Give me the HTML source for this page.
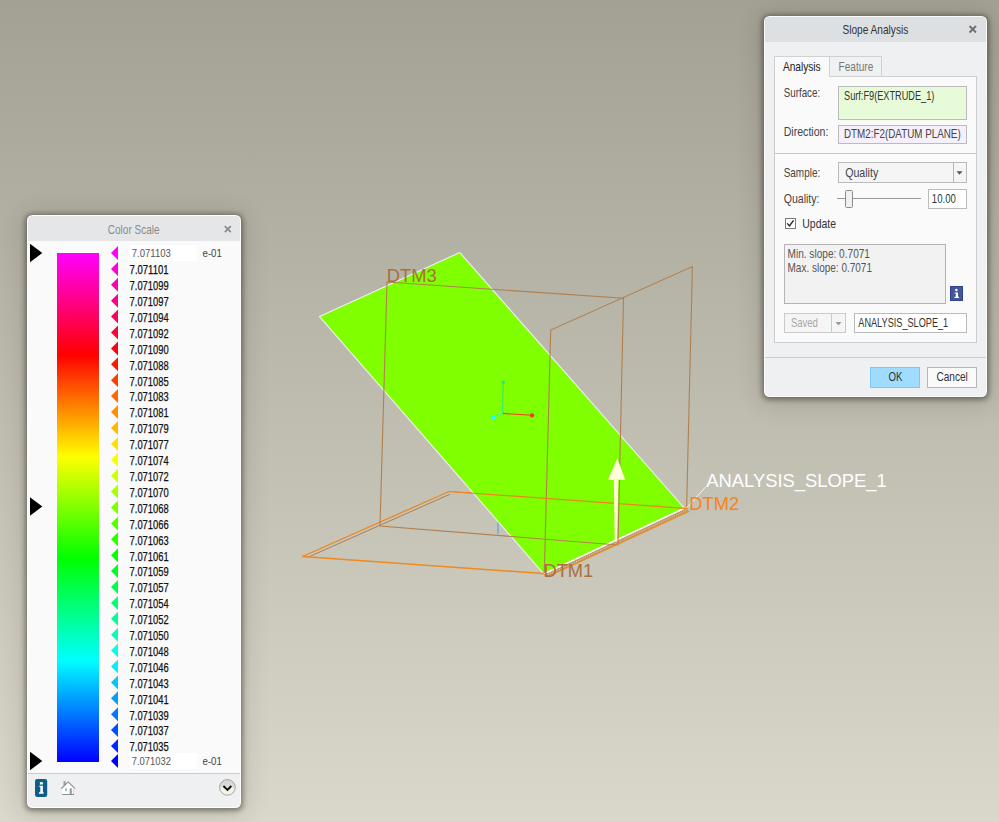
<!DOCTYPE html>
<html><head><meta charset="utf-8">
<style>
html,body{margin:0;padding:0;}
body{width:999px;height:822px;overflow:hidden;position:relative;font-family:"Liberation Sans",sans-serif;font-size:11.5px;color:#333;
background:linear-gradient(to bottom,#a3a094 0%,#dad8cb 100%);}
.abs{position:absolute;}
svg{position:absolute;left:0;top:0;}
.panel{position:absolute;box-sizing:border-box;background:#eff0f2;border:1px solid rgba(255,255,255,.75);border-radius:5.5px;box-shadow:0 1px 5px 1.5px rgba(30,28,15,.44),0 3px 26px 3px rgba(30,28,15,.16);overflow:hidden;}
.box{position:absolute;box-sizing:border-box;border:1px solid #b4b6b8;}
text{font-family:"Liberation Sans",sans-serif;}
</style></head><body>
<svg width="999" height="822" viewBox="0 0 999 822">
<!-- DTM1 horizontal plane (orange), part behind surface -->
<polyline points="302.5,556.5 449,491.5 688,508.6" fill="none" stroke="#ec861c" stroke-width="1.2"/>
<polyline points="308,557.2 450,494.2" fill="none" stroke="#a87848" stroke-width="0.9"/>
<!-- green surface -->
<polygon points="459.8,252.5 319.5,316.6 543.5,573.7 684.2,508" fill="#80ff00" stroke="#f4ecfa" stroke-width="1.1" stroke-linejoin="round"/>
<!-- band along bottom-right edge: brown hatch + orange -->
<polygon points="544.3,574.6 685,509.1 689,511 547.4,577" fill="#c09464"/>
<polyline points="543.8,574.2 684.4,508.6" fill="none" stroke="#ffffff" stroke-width="1.1"/>
<polyline points="545.6,575.8 686.8,510.2" fill="none" stroke="#eadcc8" stroke-width="0.8" stroke-dasharray="1.2 1.2"/>
<g fill="none" stroke="#b08050" stroke-width="1.1">
<!-- DTM3 plane -->
<polygon points="387,282 623.5,298.3 618,545 380,526"/>
<!-- DTM2 plane -->
<polyline points="544.3,573 550.7,330 692.4,266.6 686.6,508.5"/>
</g>
<!-- DTM1 lines over the green -->
<polyline points="449,491.5 688,508.6" fill="none" stroke="#ec861c" stroke-width="1.2"/>
<polyline points="302.5,556.5 543,573.6" fill="none" stroke="#f08a1c" stroke-width="1.5"/>
<polyline points="543,573.6 547.4,576.8 689.4,511.2" fill="none" stroke="#f08a1c" stroke-width="1.2" stroke-linejoin="round"/>
<!-- csys -->
<polyline points="503.2,382 502.6,413" fill="none" stroke="#30f068" stroke-width="1.2"/>
<polyline points="502.6,413.2 493.3,417.2" fill="none" stroke="#20f8f8" stroke-width="1"/>
<polyline points="502.8,413.4 532,415.3" fill="none" stroke="#f04020" stroke-width="1.1"/>
<circle cx="503.2" cy="382.2" r="1.7" fill="#2ce870"/>
<circle cx="493.2" cy="417.3" r="2.4" fill="#20ffff"/>
<circle cx="532.1" cy="415.4" r="2.1" fill="#ff2a2a"/>
<line x1="498" y1="522.5" x2="498" y2="534" stroke="#4aa0e0" stroke-width="1"/>
<!-- arrow -->
<polygon points="617.3,458.2 608,479.7 625.2,479.7" fill="#ffffd8"/>
<polygon points="613.8,479.3 618.4,479.3 617,541.5 614.7,541.5" fill="#ffffd0"/>
<!-- leader -->
<line x1="686.5" y1="508" x2="706" y2="486.6" stroke="#f4f4f4" stroke-width="1"/>
<g font-family="Liberation Sans, sans-serif">
<text x="386.8" y="282" font-size="18.3" fill="#a87040">DTM3</text>
<text x="543.5" y="577" font-size="18.3" fill="#a87040">DTM1</text>
<text x="689.3" y="510" font-size="18.3" fill="#f6841a">DTM2</text>
<text x="706.3" y="487.3" font-size="18.6" textLength="180.5" lengthAdjust="spacingAndGlyphs" fill="#ffffff">ANALYSIS_SLOPE_1</text>
</g>
</svg>

<div class="panel" style="left:27px;top:215px;width:214px;height:593px;background:#fafafa;">
<div class="abs" style="left:0;top:0;width:214px;height:25px;background:#e5e6e7;"></div>
<div class="abs" style="left:0;top:557px;width:214px;height:34px;background:#eff0f2;border-top:1px solid #c9cacc;"></div>
</div>
<div class="abs" style="left:57px;top:253px;width:42px;height:508.5px;background:linear-gradient(to bottom,#ff00ff 0%,#ff0000 20%,#ffff00 40%,#00ff00 60%,#00ffff 80%,#0000ff 100%);"></div>
<div class="abs" style="left:130px;top:245px;width:66.5px;height:16px;background:#fff;"></div>
<div class="abs" style="left:130px;top:753px;width:66.5px;height:16px;background:#fff;"></div>
<div class="panel" style="left:764px;top:16px;width:223px;height:381px;">
<div class="abs" style="left:0;top:0;width:223px;height:25px;background:#dde0e2;"></div>
<div class="abs" style="left:0;top:340px;width:223px;height:1px;background:#c9cbcd;"></div>
</div>
<div class="box" style="left:774px;top:76px;width:203px;height:267px;background:#fafafa;border-color:#cccdcf;"></div>
<div class="box" style="left:829px;top:56px;width:53px;height:21px;background:#f0f1f3;border-color:#cfd1d3;"></div>
<div class="box" style="left:774px;top:56px;width:56px;height:21px;background:#fafafa;border-color:#cfd1d3;border-bottom:none;"></div>
<div class="abs" style="left:775px;top:153px;width:201px;height:1px;background:#c4c6c8;"></div>
<div class="box" style="left:838px;top:86px;width:129px;height:34px;background:#e8fbd9;border-color:#b9bbbd;"></div>
<div class="box" style="left:838px;top:125px;width:129px;height:19px;background:#f6f0fc;border-color:#b9bbbd;"></div>
<div class="box" style="left:838px;top:162px;width:129px;height:21px;background:#f5f5f5;border-color:#b9bbbd;"></div>
<div class="abs" style="left:953px;top:163px;width:1px;height:19px;background:#b4b6b8;"></div>
<div class="abs" style="left:837px;top:197.5px;width:84px;height:1px;background:#9a9a9a;"></div>
<div class="box" style="left:845px;top:190px;width:8px;height:18px;background:#f0f0f0;border-color:#8c8c8c;border-radius:1.5px;"></div>
<div class="box" style="left:928px;top:189px;width:39px;height:20px;background:#fff;border-color:#b9bbbd;"></div>
<div class="box" style="left:785px;top:218px;width:11px;height:11px;background:#fff;border-color:#7a7a7a;"></div>
<div class="box" style="left:784px;top:244px;width:162px;height:60px;background:#f2f2f2;border-color:#b4b4b4;"></div>
<div class="box" style="left:784px;top:313px;width:62px;height:20px;background:#f5f5f5;border-color:#cacaca;"></div>
<div class="abs" style="left:831px;top:314px;width:1px;height:18px;background:#cacaca;"></div>
<div class="box" style="left:854px;top:313px;width:113px;height:20px;background:#fff;border-color:#b9bbbd;"></div>
<div class="box" style="left:870px;top:367px;width:50px;height:21px;background:#9fdcff;border-color:#7cc8f4;"></div>
<div class="box" style="left:927px;top:367px;width:50px;height:21px;background:#fafafa;border-color:#b4b6b8;"></div>
<div class="abs" style="left:950.1px;top:286.2px;width:12.7px;height:14.6px;background:#2f4189;"></div>
<div class="abs" style="left:951.2px;top:287.4px;width:10.5px;height:12.2px;background:#43569a;"></div>
<svg width="999" height="822" viewBox="0 0 999 822">
<path d="M224.8 226.2 L230.8 232.2 M230.8 226.2 L224.8 232.2" stroke="#8c8c8c" stroke-width="1.8" fill="none"/>
<polygon points="30,243.8 42.3,253.0 30,262.2" fill="#000"/>
<polygon points="30,497.3 42.3,506.5 30,515.7" fill="#000"/>
<polygon points="30,751.8 42.3,761.0 30,770.2" fill="#000"/>
<polygon points="118,246.0 111,253.0 118,260.0" fill="#ff00ff"/>
<polygon points="118,261.9 111,268.9 118,275.9" fill="#ff00d7"/>
<polygon points="118,277.8 111,284.8 118,291.8" fill="#ff00af"/>
<polygon points="118,293.7 111,300.7 118,307.7" fill="#ff0087"/>
<polygon points="118,309.6 111,316.6 118,323.6" fill="#ff0060"/>
<polygon points="118,325.5 111,332.5 118,339.5" fill="#ff0038"/>
<polygon points="118,341.4 111,348.4 118,355.4" fill="#ff0010"/>
<polygon points="118,357.3 111,364.3 118,371.3" fill="#ff1800"/>
<polygon points="118,373.2 111,380.2 118,387.2" fill="#ff4000"/>
<polygon points="118,389.1 111,396.1 118,403.1" fill="#ff6800"/>
<polygon points="118,405.0 111,412.0 118,419.0" fill="#ff8f00"/>
<polygon points="118,421.0 111,428.0 118,435.0" fill="#ffb700"/>
<polygon points="118,436.9 111,443.9 118,450.9" fill="#ffdf00"/>
<polygon points="118,452.8 111,459.8 118,466.8" fill="#f7ff00"/>
<polygon points="118,468.7 111,475.7 118,482.7" fill="#cfff00"/>
<polygon points="118,484.6 111,491.6 118,498.6" fill="#a7ff00"/>
<polygon points="118,500.5 111,507.5 118,514.5" fill="#80ff00"/>
<polygon points="118,516.4 111,523.4 118,530.4" fill="#58ff00"/>
<polygon points="118,532.3 111,539.3 118,546.3" fill="#30ff00"/>
<polygon points="118,548.2 111,555.2 118,562.2" fill="#08ff00"/>
<polygon points="118,564.1 111,571.1 118,578.1" fill="#00ff20"/>
<polygon points="118,580.0 111,587.0 118,594.0" fill="#00ff48"/>
<polygon points="118,595.9 111,602.9 118,609.9" fill="#00ff70"/>
<polygon points="118,611.8 111,618.8 118,625.8" fill="#00ff97"/>
<polygon points="118,627.7 111,634.7 118,641.7" fill="#00ffbf"/>
<polygon points="118,643.6 111,650.6 118,657.6" fill="#00ffe7"/>
<polygon points="118,659.5 111,666.5 118,673.5" fill="#00efff"/>
<polygon points="118,675.4 111,682.4 118,689.4" fill="#00c7ff"/>
<polygon points="118,691.3 111,698.3 118,705.3" fill="#009fff"/>
<polygon points="118,707.2 111,714.2 118,721.2" fill="#0078ff"/>
<polygon points="118,723.1 111,730.1 118,737.1" fill="#0050ff"/>
<polygon points="118,739.1 111,746.1 118,753.1" fill="#0028ff"/>
<polygon points="118,754.0 111,761.0 118,768.0" fill="#0000ff"/>
<rect x="35" y="779" width="12.2" height="18" rx="2.2" fill="#0f5e89"/>
<rect x="39.9" y="782.2" width="3" height="2.3" fill="#fff"/><path d="M39.4 785.8 H42.9 V792.3 H43.6 V793.7 H38.9 V792.3 H40.3 V787.1 H39.4 Z" fill="#fff"/>
<rect x="63.5" y="781.2" width="2.2" height="4.5" fill="#a0a0a0"/>
<polygon points="68.2,782.3 62.2,788.5 62.6,794.3 74,794.3 74.2,788.5" fill="#ffffff"/>
<rect x="69.7" y="788.3" width="2.1" height="6" fill="#9a9a9a"/><rect x="72.8" y="789" width="1.2" height="5.2" fill="#d8d8d8"/>
<rect x="65" y="788.3" width="2" height="2.8" fill="#8ec8e0"/>
<path d="M61.3 788.6 L68.2 781.9 L75.1 788.6" stroke="#8a8a8a" stroke-width="1.1" fill="none"/>
<rect x="62.2" y="794" width="12" height="1" fill="#909090"/>
<defs><linearGradient id="cg" x1="0" y1="0" x2="0" y2="1"><stop offset="0" stop-color="#d6d6d6"/><stop offset="0.45" stop-color="#dcdcd8"/><stop offset="0.55" stop-color="#f3f2e6"/><stop offset="1" stop-color="#f6f5ea"/></linearGradient></defs>
<circle cx="227.4" cy="787.4" r="7.8" fill="url(#cg)" stroke="#a4a49c" stroke-width="1"/>
<path d="M223.4 786 L227.5 789.9 L231.3 786" stroke="#111" stroke-width="2" fill="none"/>
<path d="M969.5 26 L976 32.5 M976 26 L969.5 32.5" stroke="#6e6e6e" stroke-width="1.8" fill="none"/>
<polygon points="956.5,171.2 962.5,171.2 959.5,174.7" fill="#555"/>
<polygon points="835.5,322 841.5,322 838.5,325.5" fill="#999"/>
<path d="M787.2 223.4 L789.5 226 L793.6 220.4" stroke="#222" stroke-width="1.4" fill="none"/>
<circle cx="956.4" cy="290" r="1.25" fill="#fff"/><path d="M954.7 292.4 H958 V296.8 H959 V298 H954.4 V296.8 H955.8 V293.6 H954.7 Z" fill="#fff"/>
<text x="131.8" y="257.0" textLength="39.1" lengthAdjust="spacingAndGlyphs" font-size="11.8" fill="#555">7.071103</text>
<text x="202.5" y="257.0" textLength="19.4" lengthAdjust="spacingAndGlyphs" font-size="11.8" fill="#444">e-01</text>
<text x="129.6" y="274.2" textLength="39.0" lengthAdjust="spacingAndGlyphs" font-size="12" fill="#111" stroke="#111" stroke-width="0.25">7.071101</text>
<text x="129.6" y="290.1" textLength="39.0" lengthAdjust="spacingAndGlyphs" font-size="12" fill="#111" stroke="#111" stroke-width="0.25">7.071099</text>
<text x="129.6" y="306.0" textLength="39.0" lengthAdjust="spacingAndGlyphs" font-size="12" fill="#111" stroke="#111" stroke-width="0.25">7.071097</text>
<text x="129.6" y="321.9" textLength="39.0" lengthAdjust="spacingAndGlyphs" font-size="12" fill="#111" stroke="#111" stroke-width="0.25">7.071094</text>
<text x="129.6" y="337.8" textLength="39.0" lengthAdjust="spacingAndGlyphs" font-size="12" fill="#111" stroke="#111" stroke-width="0.25">7.071092</text>
<text x="129.6" y="353.7" textLength="39.0" lengthAdjust="spacingAndGlyphs" font-size="12" fill="#111" stroke="#111" stroke-width="0.25">7.071090</text>
<text x="129.6" y="369.6" textLength="39.0" lengthAdjust="spacingAndGlyphs" font-size="12" fill="#111" stroke="#111" stroke-width="0.25">7.071088</text>
<text x="129.6" y="385.5" textLength="39.0" lengthAdjust="spacingAndGlyphs" font-size="12" fill="#111" stroke="#111" stroke-width="0.25">7.071085</text>
<text x="129.6" y="401.4" textLength="39.0" lengthAdjust="spacingAndGlyphs" font-size="12" fill="#111" stroke="#111" stroke-width="0.25">7.071083</text>
<text x="129.6" y="417.3" textLength="39.0" lengthAdjust="spacingAndGlyphs" font-size="12" fill="#111" stroke="#111" stroke-width="0.25">7.071081</text>
<text x="129.6" y="433.3" textLength="39.0" lengthAdjust="spacingAndGlyphs" font-size="12" fill="#111" stroke="#111" stroke-width="0.25">7.071079</text>
<text x="129.6" y="449.2" textLength="39.0" lengthAdjust="spacingAndGlyphs" font-size="12" fill="#111" stroke="#111" stroke-width="0.25">7.071077</text>
<text x="129.6" y="465.1" textLength="39.0" lengthAdjust="spacingAndGlyphs" font-size="12" fill="#111" stroke="#111" stroke-width="0.25">7.071074</text>
<text x="129.6" y="481.0" textLength="39.0" lengthAdjust="spacingAndGlyphs" font-size="12" fill="#111" stroke="#111" stroke-width="0.25">7.071072</text>
<text x="129.6" y="496.9" textLength="39.0" lengthAdjust="spacingAndGlyphs" font-size="12" fill="#111" stroke="#111" stroke-width="0.25">7.071070</text>
<text x="129.6" y="512.8" textLength="39.0" lengthAdjust="spacingAndGlyphs" font-size="12" fill="#111" stroke="#111" stroke-width="0.25">7.071068</text>
<text x="129.6" y="528.7" textLength="39.0" lengthAdjust="spacingAndGlyphs" font-size="12" fill="#111" stroke="#111" stroke-width="0.25">7.071066</text>
<text x="129.6" y="544.6" textLength="39.0" lengthAdjust="spacingAndGlyphs" font-size="12" fill="#111" stroke="#111" stroke-width="0.25">7.071063</text>
<text x="129.6" y="560.5" textLength="39.0" lengthAdjust="spacingAndGlyphs" font-size="12" fill="#111" stroke="#111" stroke-width="0.25">7.071061</text>
<text x="129.6" y="576.4" textLength="39.0" lengthAdjust="spacingAndGlyphs" font-size="12" fill="#111" stroke="#111" stroke-width="0.25">7.071059</text>
<text x="129.6" y="592.3" textLength="39.0" lengthAdjust="spacingAndGlyphs" font-size="12" fill="#111" stroke="#111" stroke-width="0.25">7.071057</text>
<text x="129.6" y="608.2" textLength="39.0" lengthAdjust="spacingAndGlyphs" font-size="12" fill="#111" stroke="#111" stroke-width="0.25">7.071054</text>
<text x="129.6" y="624.1" textLength="39.0" lengthAdjust="spacingAndGlyphs" font-size="12" fill="#111" stroke="#111" stroke-width="0.25">7.071052</text>
<text x="129.6" y="640.0" textLength="39.0" lengthAdjust="spacingAndGlyphs" font-size="12" fill="#111" stroke="#111" stroke-width="0.25">7.071050</text>
<text x="129.6" y="655.9" textLength="39.0" lengthAdjust="spacingAndGlyphs" font-size="12" fill="#111" stroke="#111" stroke-width="0.25">7.071048</text>
<text x="129.6" y="671.8" textLength="39.0" lengthAdjust="spacingAndGlyphs" font-size="12" fill="#111" stroke="#111" stroke-width="0.25">7.071046</text>
<text x="129.6" y="687.7" textLength="39.0" lengthAdjust="spacingAndGlyphs" font-size="12" fill="#111" stroke="#111" stroke-width="0.25">7.071043</text>
<text x="129.6" y="703.6" textLength="39.0" lengthAdjust="spacingAndGlyphs" font-size="12" fill="#111" stroke="#111" stroke-width="0.25">7.071041</text>
<text x="129.6" y="719.5" textLength="39.0" lengthAdjust="spacingAndGlyphs" font-size="12" fill="#111" stroke="#111" stroke-width="0.25">7.071039</text>
<text x="129.6" y="735.4" textLength="39.0" lengthAdjust="spacingAndGlyphs" font-size="12" fill="#111" stroke="#111" stroke-width="0.25">7.071037</text>
<text x="129.6" y="751.4" textLength="39.0" lengthAdjust="spacingAndGlyphs" font-size="12" fill="#111" stroke="#111" stroke-width="0.25">7.071035</text>
<text x="131.8" y="765.0" textLength="39.1" lengthAdjust="spacingAndGlyphs" font-size="11.8" fill="#555">7.071032</text>
<text x="202.5" y="765.0" textLength="19.4" lengthAdjust="spacingAndGlyphs" font-size="11.8" fill="#444">e-01</text>
<text x="107.8" y="234.0" textLength="51.8" lengthAdjust="spacingAndGlyphs" font-size="12.2" fill="#8a8a8a">Color Scale</text>
<text x="842.4" y="33.6" textLength="65.9" lengthAdjust="spacingAndGlyphs" font-size="12.2" fill="#333">Slope Analysis</text>
<text x="782.9" y="70.8" textLength="37.8" lengthAdjust="spacingAndGlyphs" font-size="12.2" fill="#222">Analysis</text>
<text x="838.6" y="70.8" textLength="34.7" lengthAdjust="spacingAndGlyphs" font-size="12.2" fill="#777">Feature</text>
<text x="783.7" y="96.5" textLength="36.5" lengthAdjust="spacingAndGlyphs" font-size="12.2" fill="#444">Surface:</text>
<text x="783.7" y="135.6" textLength="44.7" lengthAdjust="spacingAndGlyphs" font-size="12.2" fill="#444">Direction:</text>
<text x="844.0" y="100.1" textLength="90.4" lengthAdjust="spacingAndGlyphs" font-size="12.2" fill="#333">Surf:F9(EXTRUDE_1)</text>
<text x="844.0" y="138.1" textLength="116.7" lengthAdjust="spacingAndGlyphs" font-size="12.2" fill="#444">DTM2:F2(DATUM PLANE)</text>
<text x="783.7" y="176.9" textLength="36.5" lengthAdjust="spacingAndGlyphs" font-size="12.2" fill="#444">Sample:</text>
<text x="845.2" y="176.7" textLength="33.0" lengthAdjust="spacingAndGlyphs" font-size="12.2" fill="#444">Quality</text>
<text x="783.7" y="203.2" textLength="35.8" lengthAdjust="spacingAndGlyphs" font-size="12.2" fill="#444">Quality:</text>
<text x="931.8" y="203.0" textLength="24.0" lengthAdjust="spacingAndGlyphs" font-size="12.2" fill="#333">10.00</text>
<text x="802.3" y="228.0" textLength="33.7" lengthAdjust="spacingAndGlyphs" font-size="12.2" fill="#333">Update</text>
<text x="787.5" y="258.3" textLength="82.5" lengthAdjust="spacingAndGlyphs" font-size="12.2" fill="#555">Min. slope: 0.7071</text>
<text x="787.5" y="271.6" textLength="84.5" lengthAdjust="spacingAndGlyphs" font-size="12.2" fill="#555">Max. slope: 0.7071</text>
<text x="790.9" y="327.3" textLength="27.0" lengthAdjust="spacingAndGlyphs" font-size="12.2" fill="#a8a8a8">Saved</text>
<text x="858.3" y="327.3" textLength="89.9" lengthAdjust="spacingAndGlyphs" font-size="12.2" fill="#333">ANALYSIS_SLOPE_1</text>
<text x="888.4" y="381.2" textLength="14.0" lengthAdjust="spacingAndGlyphs" font-size="12.2" fill="#333">OK</text>
<text x="936.4" y="381.2" textLength="31.4" lengthAdjust="spacingAndGlyphs" font-size="12.2" fill="#333">Cancel</text>
</svg>
</body></html>
